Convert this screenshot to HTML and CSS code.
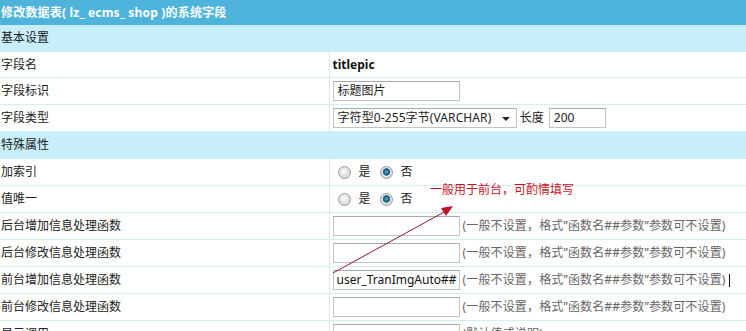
FILE: index.html
```html
<!DOCTYPE html>
<html lang="zh-CN">
<head>
    <meta charset="UTF-8">
    <title>修改系统字段</title>
    <link rel="stylesheet" href="styles.css">
</head>
<body>
    <div id="page">
        <table class="form">
            <colgroup>
                <col class="col-label">
                <col class="col-value">
            </colgroup>
            <tr class="head"><td colspan="2">修改数据表( lz_&nbsp;ecms_&nbsp;shop )的系统字段</td></tr>
            <tr class="section"><td colspan="2">基本设置</td></tr>
            <tr class="short">
                <td class="label">字段名</td>
                <td class="value"><b class="fname">titlepic</b></td>
            </tr>
            <tr>
                <td class="label">字段标识</td>
                <td class="value"><span class="box w127">标题图片</span></td>
            </tr>
            <tr>
                <td class="label">字段类型</td>
                <td class="value">
                    <span class="select">字符型0-255字节(VARCHAR)<i class="caret"></i></span>
                    <span class="txt">长度</span>
                    <span class="box w56">200</span>
                </td>
            </tr>
            <tr class="section"><td colspan="2">特殊属性</td></tr>
            <tr>
                <td class="label">加索引</td>
                <td class="value"><span class="radio"></span><span class="opt">是</span><span class="radio on"></span><span class="opt">否</span></td>
            </tr>
            <tr>
                <td class="label">值唯一</td>
                <td class="value"><span class="radio"></span><span class="opt">是</span><span class="radio on"></span><span class="opt">否</span></td>
            </tr>
            <tr>
                <td class="label">后台增加信息处理函数</td>
                <td class="value"><span class="box w127"></span><span class="hint">(一般不设置，格式”函数名##参数”参数可不设置)</span></td>
            </tr>
            <tr>
                <td class="label">后台修改信息处理函数</td>
                <td class="value"><span class="box w127"></span><span class="hint">(一般不设置，格式”函数名##参数”参数可不设置)</span></td>
            </tr>
            <tr>
                <td class="label">前台增加信息处理函数</td>
                <td class="value"><span class="box w127 latin">user_TranImgAuto##</span><span class="hint">(一般不设置，格式”函数名##参数”参数可不设置)</span><span class="cursor"></span></td>
            </tr>
            <tr>
                <td class="label">前台修改信息处理函数</td>
                <td class="value"><span class="box w127"></span><span class="hint">(一般不设置，格式”函数名##参数”参数可不设置)</span></td>
            </tr>
            <tr>
                <td class="label">显示调用</td>
                <td class="value"><span class="box w127"></span><span class="hint">(默认值或说明)</span></td>
            </tr>
        </table>

        <!-- red note drawn over the form -->
        <div class="note">一般用于前台，可酌情填写</div>
        <svg class="arrow" width="746" height="331" viewBox="0 0 746 331">
            <line x1="333" y1="273" x2="446" y2="211" stroke="#8e1b3b" stroke-width="1"/>
            <polygon points="453,206 441,208 446,216" fill="#c0102a"/>
        </svg>
    </div>
</body>
</html>
```

FILE: styles.css
```css
body {
    margin: 0;
    background-color: white;
    font-family: "Noto Sans", "Noto Sans CJK SC", sans-serif;
    font-size: 12px;
    color: #222;
    overflow: hidden;
}

#page {
    position: relative;
    width: 746px;
    height: 331px;
    overflow: hidden;
}

.form {
    width: 746px;
    border-collapse: collapse;
    table-layout: fixed;
}

.col-label {
    width: 329px;
}

.form td {
    height: 26px;
    padding: 0;
    border-bottom: 1px solid #d5eef4;
    vertical-align: middle;
    white-space: nowrap;
    line-height: 16px;
    overflow: hidden;
}

.form tr.short td {
    height: 25px;
}

.form tr.head td {
    height: 25px;
    border-bottom: none;
    background-color: #4eb4dc;
    color: white;
    font-weight: bold;
    padding-left: 1px;
    letter-spacing: 0.2px;
}

.form tr.section td {
    background-color: #c9eefb;
    border-bottom-color: #c9eefb;
    padding-left: 1px;
    color: #222;
}

.label {
    padding-left: 1px !important;
    border-right: 1px solid #d5eef4;
}

.value {
    padding-left: 3px !important;
}

.fname {
    font-size: 12px;
    color: #111;
}

.box {
    display: inline-block;
    vertical-align: middle;
    height: 18px;
    line-height: 18px;
    padding-left: 4px;
    border: 1px solid #c3c3c3;
    border-top-color: #a9a9a9;
    box-sizing: content-box;
    background: white;
    font-size: 12px;
    overflow: hidden;
}

.w127 {
    width: 121px;
}

.w56 {
    width: 51px;
}

.box.latin {
    width: 122px;
    padding-left: 3px;
    color: #111;
}

.select {
    display: inline-block;
    vertical-align: middle;
    position: relative;
    width: 178px;
    height: 18px;
    line-height: 18px;
    padding-left: 4px;
    border: 1px solid #c3c3c3;
    border-top-color: #a9a9a9;
    font-size: 12px;
    letter-spacing: 0.1px;
}

.caret {
    position: absolute;
    right: 6px;
    top: 8px;
    border-left: 4px solid transparent;
    border-right: 4px solid transparent;
    border-top: 4px solid #222;
}

.txt {
    display: inline-block;
    vertical-align: middle;
    margin: 0 2px 0 0;
}

.radio {
    display: inline-block;
    vertical-align: middle;
    width: 11px;
    height: 11px;
    margin: 0 8px 0 5px;
    border: 1px solid #9c9c9c;
    border-radius: 50%;
    background: radial-gradient(circle at 45% 40%, #fafafa, #d2d2d2 80%);
}

.radio.on {
    margin-left: 9px;
    background: radial-gradient(circle at 50% 45%, #6ab3d4 0, #1c5e80 30%, #2b6f93 42%, #e4e4e4 50%, #d0d0d0 100%);
}

.opt {
    display: inline-block;
    vertical-align: middle;
}

.hint {
    display: inline-block;
    vertical-align: middle;
    margin-left: 3px;
    color: #666;
    letter-spacing: 0.15px;
}

.cursor {
    display: inline-block;
    vertical-align: middle;
    width: 1px;
    height: 13px;
    margin-left: 3px;
    background: #111;
}

.note {
    position: absolute;
    left: 430px;
    top: 182px;
    color: #c8101e;
    font-size: 12px;
    line-height: 16px;
}

.arrow {
    position: absolute;
    left: 0;
    top: 0;
}
```
